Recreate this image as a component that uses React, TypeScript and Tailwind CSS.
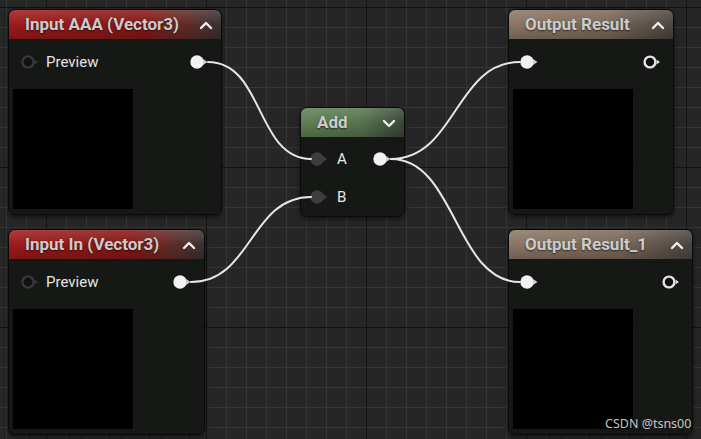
import React from "react";

type PinKind = "hollowDark" | "white" | "gray" | "hollowWhite";

function Pin({ kind }: { kind: PinKind }) {
  if (kind === "hollowDark") {
    return (
      <svg width="18" height="14" viewBox="0 0 18 14" className="shrink-0">
        <circle cx="7" cy="7" r="5.6" fill="#111111" stroke="#383838" strokeWidth="2.4" />
        <polygon points="13.5,4.5 17,7 13.5,9.5" fill="#383838" />
      </svg>
    );
  }
  if (kind === "hollowWhite") {
    return (
      <svg width="18" height="14" viewBox="0 0 18 14" className="shrink-0">
        <circle cx="7" cy="7" r="5.4" fill="#101010" stroke="#e4e4e4" strokeWidth="2.4" />
        <polygon points="13.5,4.5 17,7 13.5,9.5" fill="#d8d8d8" />
      </svg>
    );
  }
  const fill = kind === "white" ? "#f2f2f2" : "#3d3d3d";
  const tip = kind === "white" ? "#cfcfcf" : "#3d3d3d";
  return (
    <svg width="18" height="14" viewBox="0 0 18 14" className="shrink-0">
      <circle cx="7" cy="7" r="6.7" fill={fill} />
      <polygon points="13,4 17.5,7 13,10" fill={tip} />
    </svg>
  );
}

function Chevron({ up }: { up: boolean }) {
  return (
    <svg width="14" height="10" viewBox="0 0 14 10" className="shrink-0">
      <polyline
        points={up ? "2,8 7,3 12,8" : "2,3 7,8 12,3"}
        fill="none"
        stroke="#f0f0f0"
        strokeWidth="2.4"
        strokeLinecap="round"
        strokeLinejoin="round"
      />
    </svg>
  );
}

function Header({ title, bg, up }: { title: string; bg: string; up: boolean }) {
  return (
    <div className={`relative h-[29px] rounded-t-[6px] ${bg} flex items-center justify-between pl-[16px] pr-[8px] overflow-hidden`}>
      <div className="absolute inset-0 bg-linear-to-b from-white/15 via-transparent to-black/20" />
      <span className="relative font-['Roboto',sans-serif] font-bold text-[17px] leading-none text-[#cbcbcb] [text-shadow:0_1px_2px_rgba(0,0,0,0.6)]">
        {title}
      </span>
      <span className="relative">
        <Chevron up={up} />
      </span>
    </div>
  );
}

function Preview() {
  return <div className="ml-[4px] mt-[15px] h-[120px] w-[120px] bg-black" />;
}

export default function App() {
  const nodeBase =
    "absolute flex flex-col rounded-[7px] border border-[#0a0a0a] bg-[#151715]/95 shadow-[0_2px_5px_rgba(0,0,0,0.55)]";
  const red = "bg-linear-to-r from-[#9e1b1b] via-[#851717] via-65% to-[#3a3131]";
  const tan = "bg-linear-to-r from-[#8b7664] via-[#7a6858] via-60% to-[#4a4541]";
  const green = "bg-linear-to-r from-[#5f7f55] via-[#56734d] via-60% to-[#3b4739]";

  return (
    <div className="relative h-[439px] w-[701px] overflow-hidden bg-[#262626] font-['Roboto',sans-serif]">
      {/* grid */}
      <svg className="absolute inset-0" width="701" height="439">
        <defs>
          <pattern id="minor" x="0" y="0" width="20" height="20" patternUnits="userSpaceOnUse">
            <rect x="6" y="0" width="1" height="20" fill="#353535" />
            <rect x="0" y="7" width="20" height="1" fill="#353535" />
          </pattern>
          <pattern id="major" x="0" y="0" width="160" height="160" patternUnits="userSpaceOnUse">
            <rect x="46" y="0" width="1" height="160" fill="#141414" />
            <rect x="0" y="7" width="160" height="1" fill="#141414" />
          </pattern>
        </defs>
        <rect width="701" height="439" fill="url(#minor)" />
        <rect width="701" height="439" fill="url(#major)" />
      </svg>

      {/* Input AAA */}
      <div className={`${nodeBase} left-[8px] top-[9px] w-[214px] h-[206px]`}>
        <Header title="Input AAA (Vector3)" bg={red} up />
        <div className="mt-[11px] flex h-[24px] items-center justify-between pl-[12px] pr-[13px]">
          <div className="flex items-center gap-[7px]">
            <Pin kind="hollowDark" />
            <span className="text-[15px] text-[#e4e4e4]">Preview</span>
          </div>
          <Pin kind="white" />
        </div>
        <Preview />
      </div>

      {/* Input In */}
      <div className={`${nodeBase} left-[8px] top-[229px] w-[197px] h-[206px]`}>
        <Header title="Input In (Vector3)" bg={red} up />
        <div className="mt-[11px] flex h-[24px] items-center justify-between pl-[12px] pr-[13px]">
          <div className="flex items-center gap-[7px]">
            <Pin kind="hollowDark" />
            <span className="text-[15px] text-[#e4e4e4]">Preview</span>
          </div>
          <Pin kind="white" />
        </div>
        <Preview />
      </div>

      {/* Add */}
      <div className={`${nodeBase} left-[300px] top-[107px] w-[105px] h-[110px]`}>
        <Header title="Add" bg={green} up={false} />
        <div className="mt-[10px] flex h-[24px] items-center justify-between pl-[9px] pr-[13px]">
          <div className="flex items-center gap-[9px]">
            <Pin kind="gray" />
            <span className="text-[15px] text-[#e8e8e8]">A</span>
          </div>
          <Pin kind="white" />
        </div>
        <div className="mt-[14px] flex h-[24px] items-center pl-[9px]">
          <div className="flex items-center gap-[9px]">
            <Pin kind="gray" />
            <span className="text-[15px] text-[#e8e8e8]">B</span>
          </div>
        </div>
      </div>

      {/* Output Result */}
      <div className={`${nodeBase} left-[508px] top-[9px] w-[166px] h-[206px]`}>
        <Header title="Output Result" bg={tan} up />
        <div className="mt-[11px] flex h-[24px] items-center justify-between pl-[11px] pr-[12px]">
          <Pin kind="white" />
          <Pin kind="hollowWhite" />
        </div>
        <Preview />
      </div>

      {/* Output Result_1 */}
      <div className={`${nodeBase} left-[508px] top-[229px] w-[185px] h-[206px]`}>
        <Header title="Output Result_1" bg={tan} up />
        <div className="mt-[11px] flex h-[24px] items-center justify-between pl-[11px] pr-[12px]">
          <Pin kind="white" />
          <Pin kind="hollowWhite" />
        </div>
        <Preview />
      </div>

      {/* wires */}
      <svg className="pointer-events-none absolute inset-0" width="701" height="439">
        <g fill="none" stroke="#e6e6e6" strokeWidth="2" strokeLinecap="round">
          <path d="M 208 62 C 264 62, 256 159, 311 159" />
          <path d="M 191 282 C 252 282, 250 197, 311 197" />
          <path d="M 391 159 C 456 159, 455 62, 520 62" />
          <path d="M 391 159 C 456 159, 455 282, 520 282" />
        </g>
      </svg>

      <span className="absolute left-[605px] top-[415px] font-['Noto_Sans',sans-serif] text-[12.5px] text-[#c4c4c4]">
        CSDN @tsns00
      </span>
    </div>
  );
}
